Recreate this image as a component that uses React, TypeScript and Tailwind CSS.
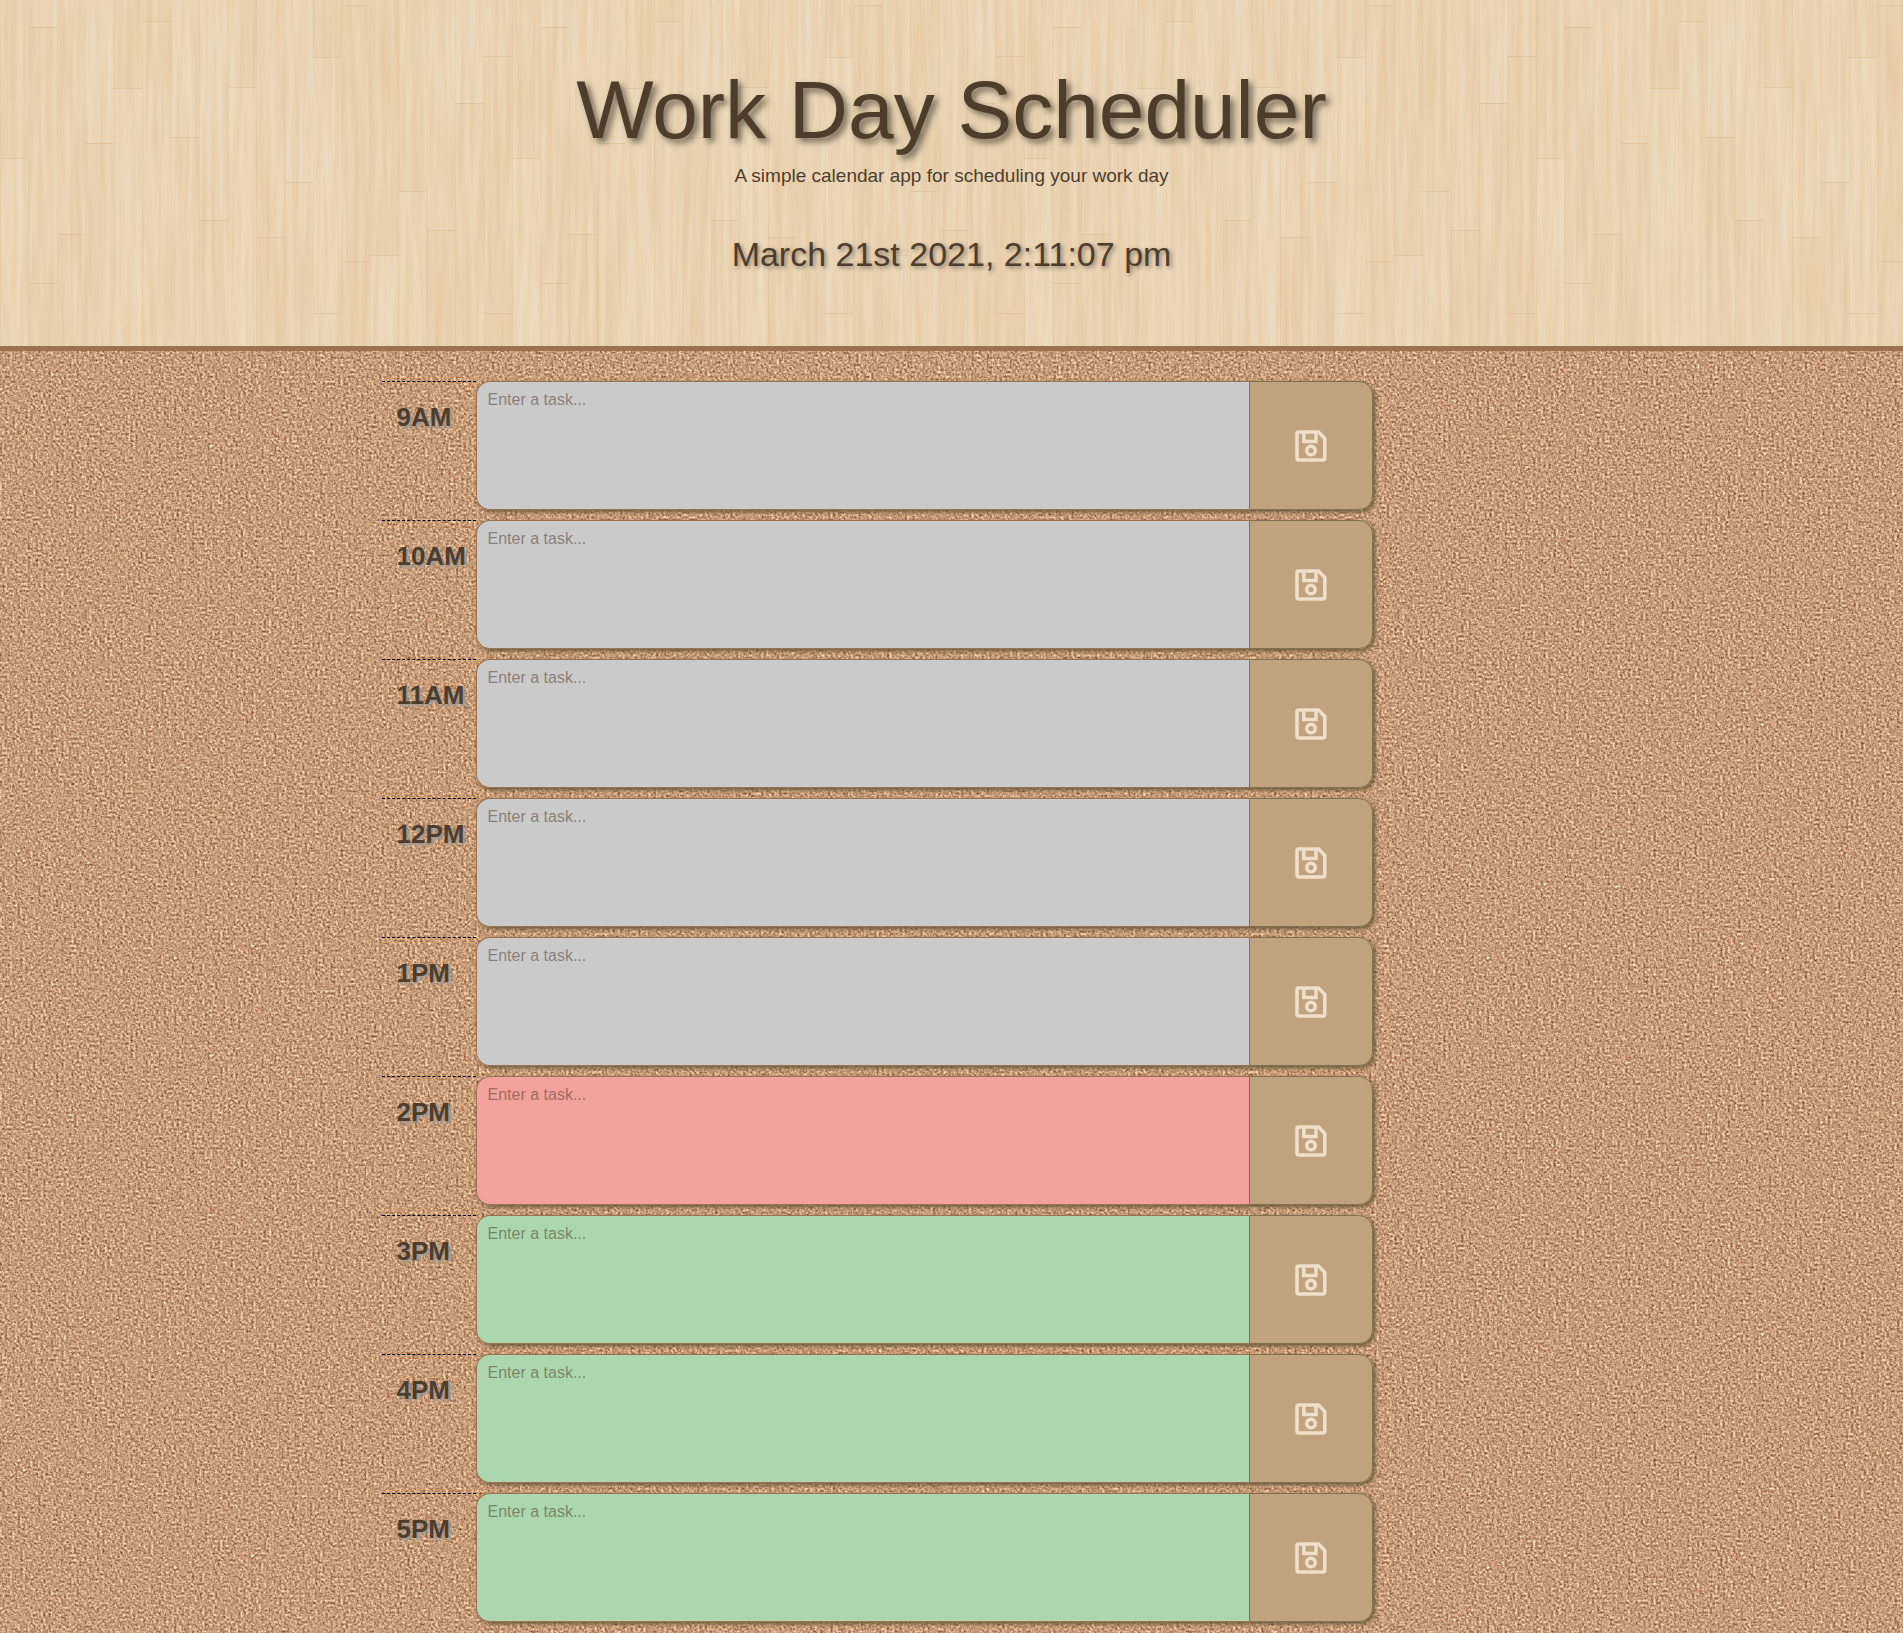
import React from "react";

type Phase = "past" | "present" | "future";

const hours: { label: string; phase: Phase }[] = [
  { label: "9AM", phase: "past" },
  { label: "10AM", phase: "past" },
  { label: "11AM", phase: "past" },
  { label: "12PM", phase: "past" },
  { label: "1PM", phase: "past" },
  { label: "2PM", phase: "present" },
  { label: "3PM", phase: "future" },
  { label: "4PM", phase: "future" },
  { label: "5PM", phase: "future" },
];

const phaseColor: Record<Phase, string> = {
  past: "bg-[#cacaca]",
  present: "bg-[#f3a19c]",
  future: "bg-[#acd7ae]",
};

// Board ends of each of the 18 planks in one 512px tile of flooring.
const joints = [
  [158], [27, 283], [234], [143], [88], [21], [137], [220], [87],
  [237], [182], [57, 313], [5, 261], [255], [191], [230], [103], [56, 313],
];
const tones = [2, 0, 1, 0, 2, 3, 0, 0, 2, 1, 0, 2, 1, 2, 3, 1, 0, 1];
const toneFill = ["#f1e3c8", "#ead4b2", "#e5c9a2", "#e2c498"];
const plank = 512 / 18;

function CorkTexture() {
  return (
    <svg className="absolute inset-0 -z-10 h-full w-full" aria-hidden="true">
      <filter id="cork" x="0" y="0" width="100%" height="100%" colorInterpolationFilters="sRGB">
        <feTurbulence type="fractalNoise" baseFrequency="0.39 0.42" numOctaves={5} seed={23} />
        <feColorMatrix
          values="0.5 0.5 0.1 0 0.23
                  0.53 0.53 0.1 0 0.03
                  0.48 0.48 0.1 0 -0.06
                  0 0 0 0 1"
        />
      </filter>
      <rect width="100%" height="100%" filter="url(#cork)" />
    </svg>
  );
}

function WoodTexture() {
  return (
    <svg className="absolute inset-0 -z-10 h-full w-full" aria-hidden="true">
      <defs>
        <filter id="grain" x="0" y="0" width="100%" height="100%" colorInterpolationFilters="sRGB">
          <feTurbulence type="fractalNoise" baseFrequency="0.17 0.008" numOctaves={3} seed={4} />
          <feColorMatrix
            values="0.05 0 0 0 0.892
                    0.1 0 0 0 0.778
                    0.15 0 0 0 0.626
                    0 0 0 0 1"
          />
        </filter>
        <pattern id="planks" width="512" height="512" patternUnits="userSpaceOnUse">
          {joints.map((ends, i) => (
            <g key={i}>
              <rect x={i * plank} y="0" width={plank} height={ends[0]} fill={toneFill[tones[i]]} opacity="0.12" />
              <rect x={i * plank} y={ends[0]} width={plank} height={512 - ends[0]} fill={toneFill[(tones[i] + 2) % 4]} opacity="0.14" />
              <rect x={i * plank} y="0" width="1" height="512" fill="#d9b987" opacity="0.25" />
              {ends.map((y) => (
                <rect key={y} x={i * plank} y={y} width={plank} height="1" fill="#cfac78" opacity="0.35" />
              ))}
            </g>
          ))}
        </pattern>
      </defs>
      <rect width="100%" height="100%" filter="url(#grain)" />
      <rect width="100%" height="100%" fill="url(#planks)" />
    </svg>
  );
}

function SaveIcon() {
  return (
    <svg
      viewBox="0 0 32 32"
      className="h-8 w-8"
      fill="none"
      stroke="#f0e0ca"
      strokeWidth="3.5"
      strokeLinejoin="round"
      aria-hidden="true"
    >
      <path d="M3.5 2.1h20.2l6.1 6.4v19.9a1.5 1.5 0 0 1-1.5 1.5H3.5A1.5 1.5 0 0 1 2 28.4V3.6a1.5 1.5 0 0 1 1.5-1.5z" />
      <path d="M8.8 2.5v8.9H21V2.5" strokeLinejoin="miter" />
      <circle cx="16" cy="20.5" r="4.3" />
    </svg>
  );
}

function HourRow({ label, phase }: { label: string; phase: Phase }) {
  const id = "task-" + label;
  return (
    <div className="mb-[10px] flex h-[129px]">
      <label
        htmlFor={id}
        className="w-[94px] shrink-0 border-t border-dashed border-black pt-[17px] pl-[15px] text-[26px] leading-9 font-bold text-[#4f3d2c] [text-shadow:2px_2px_3px_#989898]"
      >
        {label}
      </label>
      <div className="flex min-w-0 flex-1 rounded-[14px] shadow-[2px_2px_4px_#69583a]">
        <textarea
          id={id}
          placeholder="Enter a task..."
          className={
            "block min-w-0 flex-1 resize-none rounded-l-[14px] border border-r-0 border-[#9c7352] px-[11px] py-1.5 text-base text-[#4f3d2c] outline-none placeholder:text-[#4f3d2c]/55 " +
            phaseColor[phase]
          }
        />
        <button
          type="button"
          aria-label={"Save " + label + " task"}
          className="flex w-[124px] shrink-0 items-center justify-center rounded-r-[14px] border border-[#80704f] bg-[#c0a37e]"
        >
          <SaveIcon />
        </button>
      </div>
    </div>
  );
}

export default function App() {
  return (
    <div className="relative isolate min-h-screen overflow-hidden bg-[#c99b74] font-['Liberation_Sans',Arial,sans-serif]">
      <CorkTexture />
      <header className="relative isolate mb-[30px] border-b-[5px] border-[#9c7352] bg-[#ead5b4] px-4 pt-16 pb-[70px] text-center text-[#4f3d2c]">
        <WoodTexture />
        <h1 className="text-[82px] leading-[92px] [text-shadow:4px_4px_6px_rgba(0,0,0,0.5)]">Work Day Scheduler</h1>
        <p className="pt-1 text-[19px] leading-8">A simple calendar app for scheduling your work day</p>
        <p className="pt-10 text-[34px] leading-[44px] [text-shadow:2px_2px_4px_rgba(0,0,0,0.4)]">March 21st 2021, 2:11:07 pm</p>
      </header>
      <main className="mx-auto max-w-[1140px] pr-[149px]">
        {hours.map((h) => (
          <HourRow key={h.label} label={h.label} phase={h.phase} />
        ))}
      </main>
    </div>
  );
}
